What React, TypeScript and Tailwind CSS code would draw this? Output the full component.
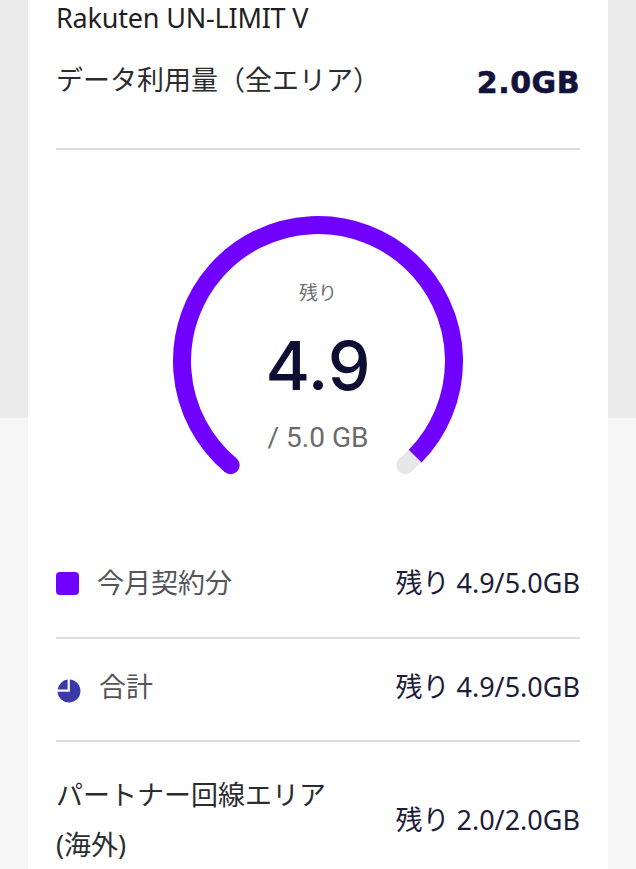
const FONT = "font-['Noto_Sans','Noto_Sans_CJK_JP',sans-serif]"

// gauge geometry (viewBox 300x300)
const CX = 150
const CY = 150
const R = 136
const START = -140
const END = 140

function pt(deg: number) {
  const rad = (deg * Math.PI) / 180
  return { x: CX + R * Math.sin(rad), y: CY - R * Math.cos(rad) }
}

function arc(from: number, to: number) {
  const a = pt(from)
  const b = pt(to)
  const large = to - from > 180 ? 1 : 0
  return `M ${a.x} ${a.y} A ${R} ${R} 0 ${large} 1 ${b.x} ${b.y}`
}

function Gauge({ remain, total }: { remain: number; total: number }) {
  const endDeg = START + (END - START) * (remain / total)
  const s = pt(START)
  return (
    <div className="relative mx-auto h-[300px] w-[300px]">
      <svg width="300" height="300" viewBox="0 0 300 300">
        <path d={arc(START, END)} fill="none" stroke="#e7e7ea" strokeWidth="18" strokeLinecap="round" />
        <path d={arc(START, endDeg)} fill="none" stroke="#7000ff" strokeWidth="18" strokeLinecap="butt" />
        <circle cx={s.x} cy={s.y} r="9" fill="#7000ff" />
      </svg>
      <div className="absolute inset-0 flex flex-col items-center pt-[70px]">
        <div className="h-[24px] text-[19px] leading-[24px] text-[#6f6f6f]">残り</div>
        <div className="mt-[26px] font-['Inter',sans-serif] text-[68px] leading-none font-medium text-[#0e0e33]">
          {remain.toFixed(1)}
        </div>
        <div className="mt-[23px] font-['Roboto',sans-serif] text-[28px] leading-[32px] text-[#6b6b6b]">
          / {total.toFixed(1)} GB
        </div>
      </div>
    </div>
  )
}

function PieIcon() {
  return (
    <svg width="26" height="26" viewBox="0 0 26 26">
      <path d="M13.8 1.5 A11.5 11.5 0 1 1 1.5 13.8 H13.8 Z" fill="#3a3aa6" />
      <path d="M11.6 1.6 A11.5 11.5 0 0 0 1.6 11.6 H11.6 Z" fill="#3a3aa6" />
    </svg>
  )
}

export default function App() {
  return (
    <div className={`${FONT} min-h-screen bg-[linear-gradient(to_bottom,#ebebeb_418px,#f5f5f5_418px)]`}>
      <div className="mx-[28px] bg-white px-[28px]">
        {/* plan */}
        <div className="h-[36px] text-[27px] leading-[36px] tracking-[-0.2px] text-[#1f1f24]">Rakuten UN-LIMIT V</div>

        {/* total usage */}
        <div className="mt-[28px] flex h-[36px] items-center justify-between">
          <span className="-mt-[3px] text-[27px] text-[#2c2c30]">データ利用量（全エリア）</span>
          <span className="font-['DejaVu_Sans',sans-serif] text-[30px] font-bold tracking-[0.5px] text-[#12123a] [-webkit-text-stroke:0.6px_#12123a]">
            2.0GB
          </span>
        </div>

        <div className="mt-[48px] h-[2px] bg-[#dcdcde]" />

        {/* gauge */}
        <div className="h-[386px] pt-[61px]">
          <Gauge remain={4.9} total={5.0} />
        </div>

        {/* breakdown */}
        <div className="flex h-[103px] items-center justify-between border-b-2 border-[#dcdcde] pb-[6px]">
          <div className="flex items-center gap-[18px]">
            <span className="h-[23px] w-[23px] rounded-[4px] bg-[#7000ff]" />
            <span className="text-[27px] text-[#555559]">今月契約分</span>
          </div>
          <span className="text-[27px] text-[#1d1d3a]">残り 4.9/5.0GB</span>
        </div>

        <div className="flex h-[103px] items-center justify-between border-b-2 border-[#dcdcde] pb-[4px]">
          <div className="flex items-center gap-[17px]">
            <span className="mt-[6px]"><PieIcon /></span>
            <span className="text-[27px] text-[#555559]">合計</span>
          </div>
          <span className="text-[27px] text-[#1d1d3a]">残り 4.9/5.0GB</span>
        </div>

        <div className="flex items-center justify-between pt-[28px] pb-[20px]">
          <div className="text-[27px] leading-[50px] text-[#2c2c30]">
            <div>パートナー回線エリア</div>
            <div>(海外)</div>
          </div>
          <span className="text-[27px] text-[#1d1d3a]">残り 2.0/2.0GB</span>
        </div>
      </div>
    </div>
  )
}
